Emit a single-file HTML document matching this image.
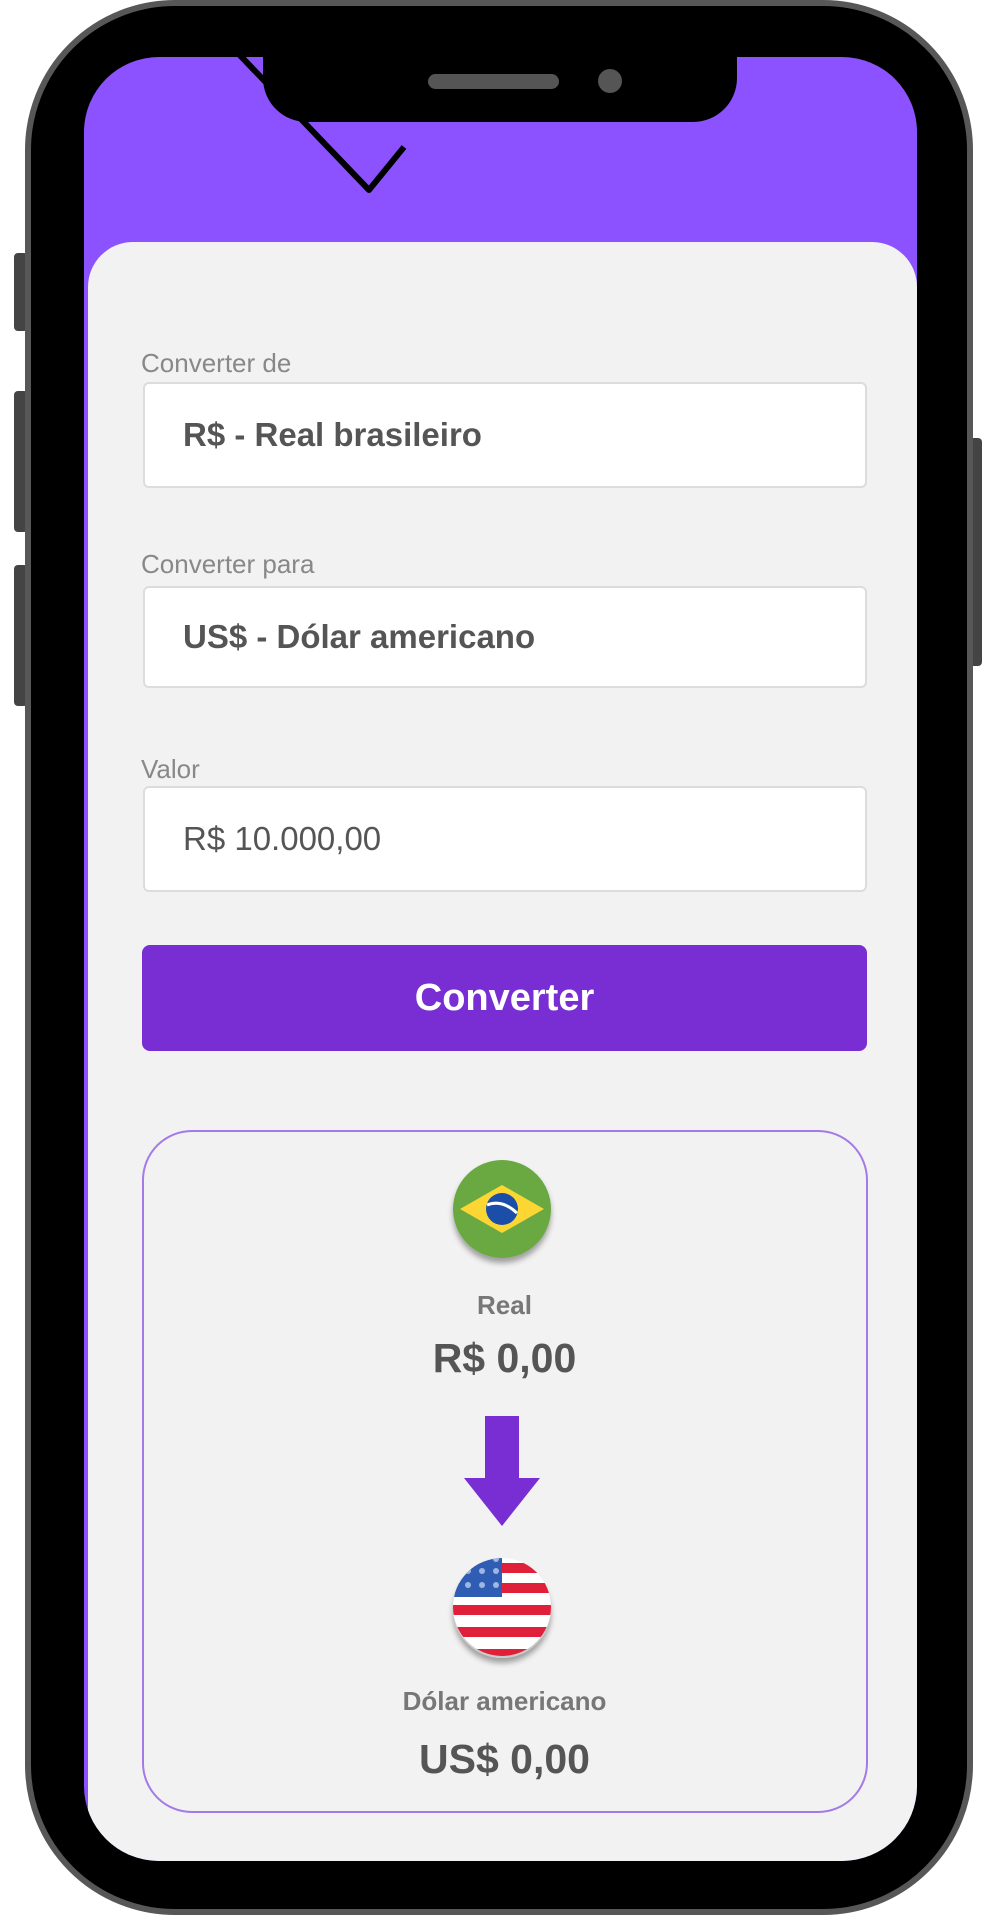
<!DOCTYPE html>
<html><head><meta charset="utf-8"><style>
*{margin:0;padding:0;box-sizing:border-box}
body{width:1000px;height:1920px;background:#fff;position:relative;overflow:hidden;font-family:"Liberation Sans",Arial,sans-serif}
.a{position:absolute}
.lbl{position:absolute;left:141px;font-size:26px;color:#888;line-height:30px}
.inp{position:absolute;left:143px;width:724px;background:#fff;border:2px solid #dcdcdc;border-radius:6px}
.inp span{position:absolute;left:38px;top:50%;transform:translateY(-50%);font-size:33px;color:#555;white-space:nowrap}
.ctr{position:absolute;left:142px;width:725px;text-align:center;color:#555;white-space:nowrap}
</style></head><body>
<!-- side buttons -->
<div class="a" style="left:14px;top:253px;width:14px;height:78px;background:#444;border-radius:4px"></div>
<div class="a" style="left:14px;top:391px;width:14px;height:141px;background:#444;border-radius:4px"></div>
<div class="a" style="left:14px;top:565px;width:14px;height:141px;background:#444;border-radius:4px"></div>
<div class="a" style="left:968px;top:438px;width:14px;height:228px;background:#444;border-radius:4px"></div>
<!-- phone -->
<div class="a" style="left:25px;top:0;width:948px;height:1915px;background:#000;border:6px solid #575757;border-radius:150px"></div>
<!-- screen -->
<div class="a" style="left:84px;top:57px;width:833px;height:1804px;background:#8c52ff;border-radius:75px;overflow:hidden">
  <svg class="a" style="left:0;top:0" width="833" height="220"><path d="M148 -10 L285 133 L320 90" fill="none" stroke="#000" stroke-width="6" stroke-linejoin="round"/></svg>
  <div class="a" style="left:4px;top:185px;width:829px;height:1700px;background:#f2f2f2;border-radius:45px 45px 0 0"></div>
</div>
<!-- notch -->
<div class="a" style="left:263px;top:50px;width:474px;height:72px;background:#000;border-radius:0 0 44px 44px"></div>
<div class="a" style="left:428px;top:74px;width:131px;height:15px;background:#555;border-radius:8px"></div>
<div class="a" style="left:598px;top:69px;width:24px;height:24px;background:#555;border-radius:50%"></div>

<div class="lbl" style="top:348px">Converter de</div>
<div class="inp" style="top:382px;height:106px"><span style="font-weight:bold">R$ - Real brasileiro</span></div>
<div class="lbl" style="top:549px">Converter para</div>
<div class="inp" style="top:586px;height:102px"><span style="font-weight:bold">US$ - Dólar americano</span></div>
<div class="lbl" style="top:754px">Valor</div>
<div class="inp" style="top:786px;height:106px"><span>R$ 10.000,00</span></div>

<div class="a" style="left:142px;top:945px;width:725px;height:106px;background:#782ed2;border-radius:8px;color:#fff;font-weight:bold;font-size:38px;text-align:center;line-height:106px">Converter</div>

<div class="a" style="left:142px;top:1130px;width:726px;height:683px;border:2px solid #a27be8;border-radius:50px"></div>

<svg class="a" style="left:446px;top:1155px" width="112" height="115">
  <defs><filter id="sh"><feDropShadow dx="0" dy="5" stdDeviation="3" flood-color="#000" flood-opacity="0.35"/></filter></defs>
  <circle cx="56" cy="54" r="49" fill="#6aa842" filter="url(#sh)"/>
  <path d="M14 54 L56 30 L98 54 L56 78Z" fill="#fcd733"/>
  <circle cx="56" cy="54" r="16" fill="#1a4ea8"/>
  <path d="M41 50 Q56 44 71 58" stroke="#fff" stroke-width="3" fill="none"/>
</svg>
<div class="ctr" style="top:1290px;font-size:26px;font-weight:bold;color:#777">Real</div>
<div class="ctr" style="top:1335px;font-size:41px;font-weight:bold">R$ 0,00</div>

<svg class="a" style="left:460px;top:1414px" width="84" height="115"><path d="M25 2 H59 V64 H80 L42 112 L4 64 H25Z" fill="#782ed2"/></svg>

<svg class="a" style="left:446px;top:1553px" width="112" height="115">
  <defs><clipPath id="c"><circle cx="56" cy="54" r="49"/></clipPath></defs>
  <circle cx="56" cy="56" r="49" fill="#ccc" filter="url(#sh)"/>
  <g clip-path="url(#c)">
    <rect x="0" y="0" width="112" height="112" fill="#fff"/>
    <rect x="0" y="10" width="112" height="10" fill="#e0203a"/>
    <rect x="0" y="30" width="112" height="10" fill="#e0203a"/>
    <rect x="0" y="52" width="112" height="10" fill="#e0203a"/>
    <rect x="0" y="74" width="112" height="10" fill="#e0203a"/>
    <rect x="0" y="96" width="112" height="12" fill="#e0203a"/>
    <rect x="0" y="0" width="56" height="44" fill="#2f5db3"/>
    <g fill="#9fb6e0"><circle cx="22" cy="18" r="3"/><circle cx="36" cy="18" r="3"/><circle cx="50" cy="18" r="3"/><circle cx="22" cy="32" r="3"/><circle cx="36" cy="32" r="3"/><circle cx="50" cy="32" r="3"/><circle cx="36" cy="6" r="3"/><circle cx="50" cy="6" r="3"/></g>
  </g>
</svg>
<div class="ctr" style="top:1686px;font-size:26px;font-weight:bold;color:#777">Dólar americano</div>
<div class="ctr" style="top:1736px;font-size:41px;font-weight:bold">US$ 0,00</div>
</body></html>
